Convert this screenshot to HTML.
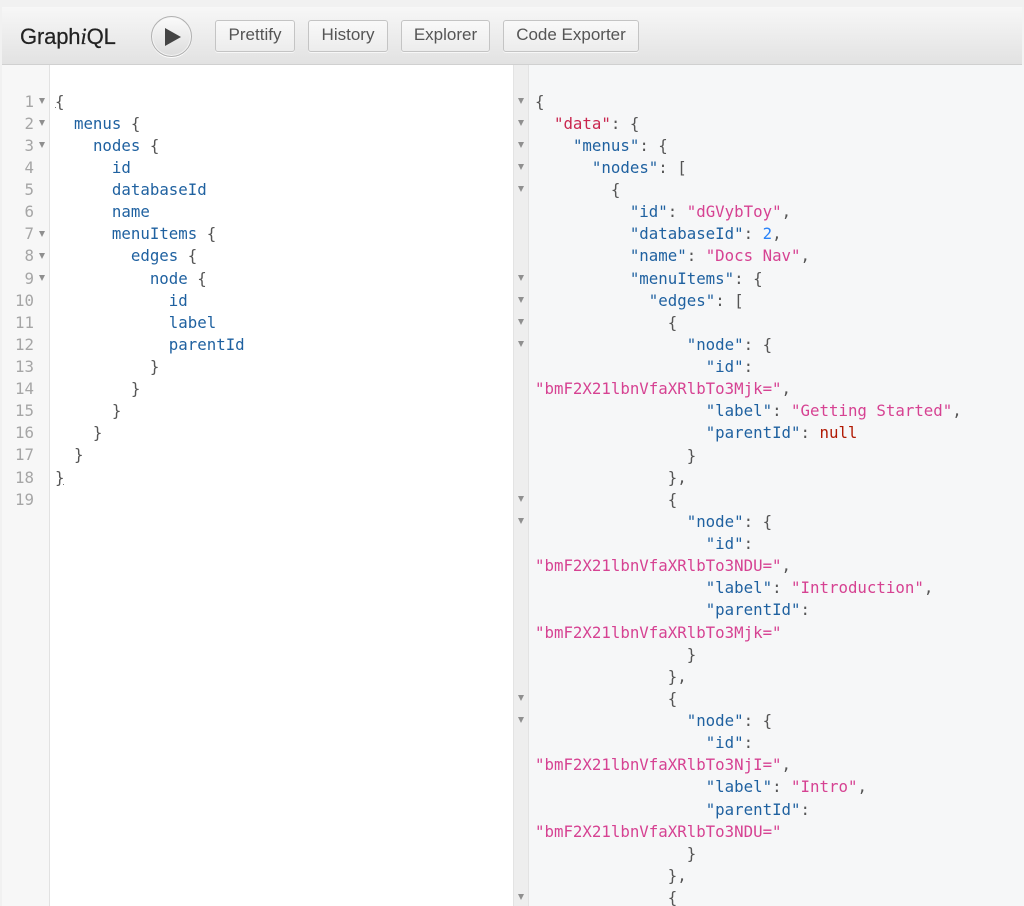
<!DOCTYPE html>
<html>
<head>
<meta charset="utf-8">
<style>
html,body{margin:0;padding:0;background:#f1f1f1;}
#app{position:relative;width:1024px;height:906px;overflow:hidden;background:#f1f1f1;font-family:"Liberation Sans",sans-serif;}
#bar{position:absolute;left:2px;top:7px;width:1020px;height:57px;background:linear-gradient(#f7f7f7,#e2e2e2);border-bottom:1px solid #d0d0d0;}
#strip{position:absolute;left:1022px;top:7px;width:2px;height:58px;background:#f3f3f3;}
#logo{position:absolute;left:20px;top:24px;font-size:22px;line-height:26px;color:#222;letter-spacing:-.15px;-webkit-text-stroke:.2px #222;filter:blur(.3px);}
#logo i{font-family:"Liberation Serif",serif;font-size:23px;}
#play{position:absolute;left:151px;top:16px;width:39px;height:39px;border-radius:50%;border:1px solid #b0b0b0;background:linear-gradient(#fbfbfb,#dcdcdc);box-shadow:0 1px 0 #fff,inset 0 0 0 1px #f5f5f5;}
#play svg{position:absolute;left:12.5px;top:10.5px;}
.btn{position:absolute;top:20px;height:30px;border:1px solid #c4c4c4;border-radius:3px;background:linear-gradient(#f9f9f9,#ececec);box-shadow:0 1px 0 #f7f7f7;color:#555;font-size:17px;line-height:28px;text-align:center;box-sizing:content-box;filter:blur(.25px);}
#left{position:absolute;left:2px;top:65px;width:511px;height:841px;background:#fff;}
#lgut{position:absolute;left:2px;top:65px;width:47px;height:841px;background:#f7f7f7;border-right:1px solid #e2e2e2;}
#rgut{position:absolute;left:513px;top:65px;height:841px;background:#eeeeee;border-left:1px solid #e3e3e3;border-right:1px solid #e3e3e3;box-sizing:content-box;width:14px;}
#right{position:absolute;left:529px;top:65px;width:495px;height:841px;background:#f6f7f8;}
pre{position:absolute;margin:0;font-family:"DejaVu Sans Mono","Liberation Mono",monospace;font-size:15.75px;line-height:22.11px;color:#555;white-space:pre;filter:blur(.3px);}
#ltext{left:55px;top:90.7px;}
#rtext{left:535px;top:90.6px;line-height:22.13px;}
#nums{left:2px;top:90.7px;width:32px;text-align:right;color:#a6a6a6;}
.p{color:#1f61a0;}
.d{color:#c9264f;}
.s{color:#d64292;}
.n{color:#2882f9;}
.u{color:#b11a04;}
.a{position:absolute;width:0;height:0;border-left:3.5px solid transparent;border-right:3.5px solid transparent;border-top:6px solid #8f8f8f;}
.dot{position:absolute;width:1px;height:1px;background:#777;}
</style>
</head>
<body>
<div id="app">
<div id="bar"></div>
<div id="strip"></div>
<div id="logo">Graph<i>i</i>QL</div>
<div id="play"><svg width="16" height="18" viewBox="0 0 16 18"><path d="M0 0L16 9L0 18Z" fill="#444"/></svg></div>
<div class="btn" style="left:215px;width:78px">Prettify</div>
<div class="btn" style="left:308px;width:78px">History</div>
<div class="btn" style="left:401px;width:87px">Explorer</div>
<div class="btn" style="left:503px;width:134px">Code Exporter</div>

<div id="left"></div>
<div id="lgut"></div>
<div id="rgut"></div>
<div id="right"></div>

<pre id="nums">1
2
3
4
5
6
7
8
9
10
11
12
13
14
15
16
17
18
19</pre>

<div class="a" style="left:39px;top:98px"></div>
<div class="a" style="left:39px;top:120px"></div>
<div class="a" style="left:39px;top:142px"></div>
<div class="a" style="left:39px;top:231px"></div>
<div class="a" style="left:39px;top:253px"></div>
<div class="a" style="left:39px;top:275px"></div>
<div class="dot" style="left:55px;top:107px"></div>
<div class="dot" style="left:63px;top:484px"></div>

<pre id="ltext">{
  <span class="p">menus</span> {
    <span class="p">nodes</span> {
      <span class="p">id</span>
      <span class="p">databaseId</span>
      <span class="p">name</span>
      <span class="p">menuItems</span> {
        <span class="p">edges</span> {
          <span class="p">node</span> {
            <span class="p">id</span>
            <span class="p">label</span>
            <span class="p">parentId</span>
          }
        }
      }
    }
  }
}
</pre>

<div class="a" style="left:518px;top:98px"></div>
<div class="a" style="left:518px;top:120px"></div>
<div class="a" style="left:518px;top:142px"></div>
<div class="a" style="left:518px;top:164px"></div>
<div class="a" style="left:518px;top:186px"></div>
<div class="a" style="left:518px;top:275px"></div>
<div class="a" style="left:518px;top:297px"></div>
<div class="a" style="left:518px;top:319px"></div>
<div class="a" style="left:518px;top:341px"></div>
<div class="a" style="left:518px;top:496px"></div>
<div class="a" style="left:518px;top:518px"></div>
<div class="a" style="left:518px;top:695px"></div>
<div class="a" style="left:518px;top:717px"></div>
<div class="a" style="left:518px;top:894px"></div>

<pre id="rtext">{
  <span class="d">"data"</span>: {
    <span class="p">"menus"</span>: {
      <span class="p">"nodes"</span>: [
        {
          <span class="p">"id"</span>: <span class="s">"dGVybToy"</span>,
          <span class="p">"databaseId"</span>: <span class="n">2</span>,
          <span class="p">"name"</span>: <span class="s">"Docs Nav"</span>,
          <span class="p">"menuItems"</span>: {
            <span class="p">"edges"</span>: [
              {
                <span class="p">"node"</span>: {
                  <span class="p">"id"</span>:
<span class="s">"bmF2X21lbnVfaXRlbTo3Mjk="</span>,
                  <span class="p">"label"</span>: <span class="s">"Getting Started"</span>,
                  <span class="p">"parentId"</span>: <span class="u">null</span>
                }
              },
              {
                <span class="p">"node"</span>: {
                  <span class="p">"id"</span>:
<span class="s">"bmF2X21lbnVfaXRlbTo3NDU="</span>,
                  <span class="p">"label"</span>: <span class="s">"Introduction"</span>,
                  <span class="p">"parentId"</span>:
<span class="s">"bmF2X21lbnVfaXRlbTo3Mjk="</span>
                }
              },
              {
                <span class="p">"node"</span>: {
                  <span class="p">"id"</span>:
<span class="s">"bmF2X21lbnVfaXRlbTo3NjI="</span>,
                  <span class="p">"label"</span>: <span class="s">"Intro"</span>,
                  <span class="p">"parentId"</span>:
<span class="s">"bmF2X21lbnVfaXRlbTo3NDU="</span>
                }
              },
              {</pre>
</div>
</body>
</html>
